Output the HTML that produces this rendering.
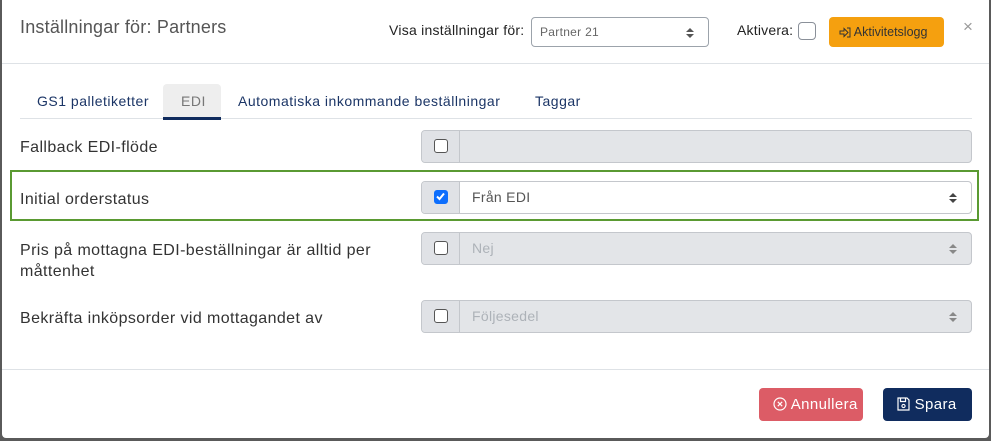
<!DOCTYPE html>
<html><head><meta charset="utf-8"><style>
*{box-sizing:border-box;margin:0;padding:0}
body{width:991px;height:441px;background:#5a5a5a;font-family:"Liberation Sans","DejaVu Sans",sans-serif;position:relative;overflow:hidden}
.modal{position:absolute;left:2px;top:0;width:987px;height:438px;background:#fff;border-radius:0 0 4px 4px}
.abs{position:absolute}
.hline{position:absolute;height:1px;background:#dee2e6}
.title{left:18px;top:17px;font-size:18px;color:#555;letter-spacing:0.2px}
.tab{position:absolute;top:84px;height:36px;line-height:34px;font-size:14px;color:#1b3566;letter-spacing:0.5px}
.ig{position:absolute;left:419px;width:551px;height:33px;border:1px solid #c4c7cc;border-radius:4px;background:#e3e5e8;overflow:hidden}
.ig .add{position:absolute;left:0;top:0;width:38px;height:100%;border-right:1px solid #c4c7cc;background:#e0e2e6}
.cb{position:absolute;left:12px;top:8px;width:14px;height:14px;border:1.5px solid #555;border-radius:3px;background:#fff}
.ig .val{position:absolute;left:50px;top:0;line-height:31px;font-size:14px;color:#adb2b8;letter-spacing:0.3px}
.arr{position:absolute;right:14px;top:10px;width:8px;height:12px}
.lbl{position:absolute;left:18px;font-size:16px;color:#333;line-height:21px;letter-spacing:0.4px}
.btn{position:absolute;top:388px;height:33px;border-radius:4px;color:#fff;font-size:15px;line-height:33px;letter-spacing:0.4px}
</style></head><body>
<div class="modal">
<div class="abs title">Inställningar för: Partners</div>
<div class="abs" style="left:387px;top:22px;font-size:14px;color:#222;letter-spacing:0.25px">Visa inställningar för:</div>
<div class="abs" style="left:529px;top:17px;width:178px;height:30px;border:1px solid #9ca3ab;border-radius:4px">
 <span class="abs" style="left:8px;top:7px;font-size:12px;color:#666;letter-spacing:0.3px">Partner 21</span>
 <svg class="abs" style="left:154px;top:9px" width="8" height="12" viewBox="0 0 8 12"><path d="M0 5L4 1L8 5Z M0 7L4 11L8 7Z" fill="#555"/></svg>
</div>
<div class="abs" style="left:735px;top:22px;font-size:14px;color:#222;letter-spacing:0.2px">Aktivera:</div>
<div class="abs" style="left:796px;top:22px;width:18px;height:18px;border:1px solid #8a9099;border-radius:4px"></div>
<div class="abs" style="left:827px;top:17px;width:115px;height:30px;background:#f5a00f;border-radius:4px;font-size:12.5px;color:#333;line-height:30px;padding-left:10px">
 <svg style="vertical-align:-2px" width="12" height="11" viewBox="0 0 12 11"><path d="M1 4h4V1.5L9 5.5 5 9.5V7H1Z M8 1h3v9H8" fill="none" stroke="#333" stroke-width="1"/></svg> Aktivitetslogg</div>
<div class="abs" style="left:961px;top:17px;font-size:17px;color:#999">×</div>
<div class="hline" style="left:0;top:63px;width:987px"></div>

<div class="abs" style="left:161px;top:84px;width:58px;height:35px;background:#eee;border-radius:4px 4px 0 0"></div>
<div class="tab" style="left:35px">GS1 palletiketter</div>
<div class="tab" style="left:179px;color:#777">EDI</div>
<div class="tab" style="left:236px">Automatiska inkommande beställningar</div>
<div class="tab" style="left:533px">Taggar</div>
<div class="hline" style="left:18px;top:118px;width:952px"></div>
<div class="abs" style="left:161px;top:117px;width:58px;height:3px;background:#102c5e"></div>

<div class="lbl" style="top:137px">Fallback EDI-flöde</div>
<div class="ig" style="top:130px"><div class="add"><div class="cb"></div></div></div>

<div class="abs" style="left:8px;top:170px;width:969px;height:51px;border:2px solid #5a9a32"></div>
<div class="lbl" style="top:189px">Initial orderstatus</div>
<div class="ig" style="top:181px;background:#fff"><div class="add"><div class="cb" style="background:#0d6efd;border-color:#0d6efd"><svg width="11" height="11" viewBox="0 0 11 11" style="position:absolute;left:0;top:0"><path d="M2 5.5L4.5 8L9 2.5" fill="none" stroke="#fff" stroke-width="2"/></svg></div></div>
 <div class="val" style="color:#555">Från EDI</div>
 <svg class="arr" viewBox="0 0 8 12"><path d="M0 5L4 1L8 5Z M0 7L4 11L8 7Z" fill="#444"/></svg></div>

<div class="lbl" style="top:240px">Pris på mottagna EDI-beställningar är alltid per<br>måttenhet</div>
<div class="ig" style="top:232px"><div class="add"><div class="cb"></div></div><div class="val">Nej</div>
 <svg class="arr" viewBox="0 0 8 12"><path d="M0 5L4 1L8 5Z M0 7L4 11L8 7Z" fill="#888"/></svg></div>

<div class="lbl" style="top:308px">Bekräfta inköpsorder vid mottagandet av</div>
<div class="ig" style="top:300px"><div class="add"><div class="cb"></div></div><div class="val">Följesedel</div>
 <svg class="arr" viewBox="0 0 8 12"><path d="M0 5L4 1L8 5Z M0 7L4 11L8 7Z" fill="#888"/></svg></div>

<div class="hline" style="left:0;top:369px;width:987px"></div>
<div class="btn" style="left:757px;width:104px;background:#dc5c66;padding-left:14px">
 <svg style="vertical-align:-2px" width="14" height="14" viewBox="0 0 14 14"><circle cx="7" cy="7" r="6" fill="none" stroke="#fff" stroke-width="1.2"/><path d="M4.8 4.8l4.4 4.4M9.2 4.8l-4.4 4.4" stroke="#fff" stroke-width="1.2"/></svg> Annullera</div>
<div class="btn" style="left:881px;width:89px;background:#102c5e;padding-left:14px">
 <svg style="vertical-align:-2px" width="13" height="14" viewBox="0 0 13 14"><path d="M1 1h9l2 2v10H1Z M3.5 1v3.5h5V1" fill="none" stroke="#fff" stroke-width="1.2"/><circle cx="6.5" cy="9" r="1.6" fill="none" stroke="#fff" stroke-width="1.1"/></svg> Spara</div>
</div>
</body></html>
